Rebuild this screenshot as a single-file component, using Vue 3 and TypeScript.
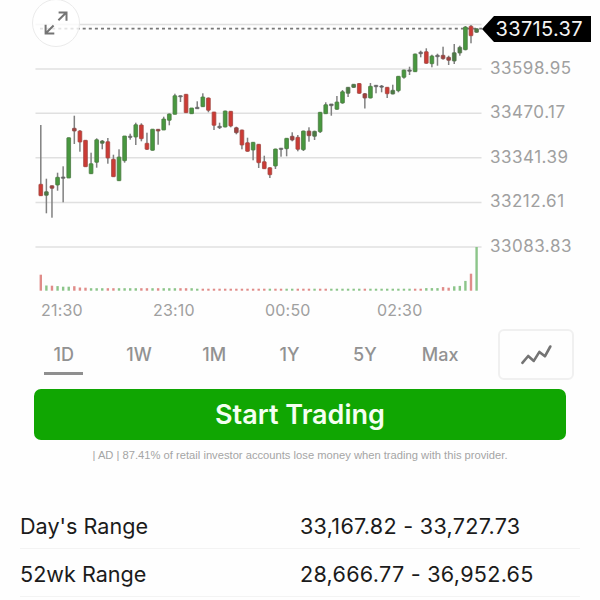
<script setup lang="ts">
type Tone = 'g' | 'r' | 'n' | 'dg' | 'dr'
type Candle = [tone: Tone, top: number, bottom: number, high: number, low: number]

const STEP = 5.587
const FIRST = 40.8
const BASELINE = 290.7

const gridLines: number[] = [24.5, 69, 113.3, 157.8, 202.4, 247]

const candles: Candle[] = [
  ['r', 184.3, 195.7, 125, 196], ['dg', 191.7, 195.3, 178.7, 213.3], ['dr', 185.7, 188.3, 185.7, 217.7],
  ['g', 177.3, 185, 172.7, 190.7], ['n', 177, 178.3, 166.3, 202.3], ['g', 137.7, 178, 137.7, 178],
  ['dr', 128.3, 131, 115.7, 144], ['r', 131, 142, 130, 151.7], ['r', 140.3, 166.7, 140, 167],
  ['g', 163.7, 173.7, 152.7, 174], ['g', 139.7, 162.3, 138.3, 167.7], ['dg', 141, 143.3, 140, 149.3],
  ['r', 141.7, 158, 138, 163.7], ['r', 159.3, 176.7, 154.7, 177], ['g', 157, 180.7, 149.3, 181],
  ['g', 136, 160.7, 136, 162.7], ['n', 136.2, 137.4, 133.7, 139.7], ['g', 124.7, 137, 122.7, 145],
  ['r', 125, 138.7, 123.3, 141.3], ['r', 143.3, 149.3, 132.7, 150], ['g', 129.2, 150.3, 129, 150.5],
  ['dr', 129.3, 131, 129, 144.7], ['g', 119, 130, 116.7, 130], ['g', 114, 120.3, 113.5, 125.3],
  ['g', 95.7, 114.3, 93.7, 114.3], ['n', 95.7, 96.8, 95.5, 102], ['r', 94.3, 112.7, 94, 113],
  ['g', 108, 113.7, 108, 114], ['n', 107.3, 108.7, 101.3, 108.7], ['g', 97, 106.7, 93.3, 107],
  ['r', 98, 110.3, 97.5, 112.3], ['r', 112, 125.3, 112, 130], ['n', 126.3, 127.7, 122.7, 129],
  ['g', 111, 127, 110.7, 127.3], ['r', 111.3, 126, 111, 127.3], ['dr', 127.7, 132.7, 126.7, 134.3],
  ['r', 130, 145, 129.7, 149.3], ['r', 142.7, 151.3, 137.7, 151.7], ['g', 142.3, 150, 142, 160.3],
  ['r', 144.3, 162.7, 144, 168], ['r', 161.7, 168.7, 155.7, 169], ['r', 167.7, 174.7, 167.3, 178],
  ['g', 149, 166, 148.7, 169], ['n', 148.2, 149.4, 148, 156.7], ['g', 138.3, 148.7, 138, 156.3],
  ['dr', 136.3, 140, 132.3, 141.3], ['r', 137.3, 149.3, 135, 151.3], ['g', 131, 149.7, 130.7, 151],
  ['dr', 131, 135.7, 127.3, 141.7], ['dg', 131.3, 136.3, 130.7, 140], ['g', 112.3, 131.7, 112, 133],
  ['g', 104.7, 113.7, 102.3, 114], ['n', 104, 105.7, 104, 115.7], ['g', 102, 109.3, 96, 109.7],
  ['g', 91.7, 103, 90, 103.7], ['dg', 87.3, 93.3, 87, 97], ['dg', 84.3, 87.4, 84, 87.7],
  ['r', 83.5, 93.3, 83.3, 93.7], ['dr', 93.7, 98, 93, 108.5], ['g', 86.3, 98, 83, 98.3],
  ['n', 85.3, 86.7, 85, 93.3], ['n', 86, 87.2, 85, 92.3], ['r', 87.3, 93.7, 87, 98],
  ['dg', 90.3, 94, 84.7, 94.3], ['g', 76.3, 90.7, 76, 92.3], ['g', 70, 77.3, 69.7, 78.7],
  ['n', 70, 71.3, 66.7, 75], ['g', 54, 71.7, 53.7, 72], ['n', 52.2, 53.7, 50.7, 57.3],
  ['r', 51.7, 63.3, 48.3, 63.7], ['g', 56, 63.7, 54.7, 67.3], ['n', 55.3, 56.7, 53.7, 65.7],
  ['dr', 55.3, 58.7, 46.7, 59.7], ['dr', 57.3, 60.3, 55.7, 65], ['dg', 52.7, 61, 44, 64],
  ['dg', 47.3, 53, 45.7, 55.7], ['g', 27, 49.7, 26, 50.3], ['r', 26.3, 35.7, 25, 43.3],
  ['dg', 28.7, 32.3, 28.5, 32.7],
]

const volumeTones = 'rgrgggrrrgggrrggggrrgrgggrrggrrrrrrrrrrrrgrrggrrrgrrggggggrggggggggrrgggrrggggrg'
const volumeHeights: Record<number, number> = {
  0: 16, 1: 5.2, 2: 5, 3: 4.6, 4: 4, 5: 4, 6: 4.5, 7: 3.2, 8: 3,
  69: 2.6, 70: 2.6, 71: 2.6, 72: 3.6, 73: 3, 74: 4.4, 75: 4.8, 76: 9.8, 77: 17, 78: 43.7,
}

const volumeHeight = (i: number): number => volumeHeights[i] ?? (i < 28 ? 2.5 : 2)
const volumeTone = (i: number): string =>
  i === 78 ? 'g' : i === 77 || i === 72 || i === 73 ? 'r' : i > 73 ? 'g' : volumeTones[i]
const xAt = (i: number): number => FIRST + i * STEP

const prices: string[] = ['33598.95', '33470.17', '33341.39', '33212.61', '33083.83']
const times: string[] = ['21:30', '23:10', '00:50', '02:30']
const ranges: string[] = ['1D', '1W', '1M', '1Y', '5Y', 'Max']
const stats = [
  { label: "Day's Range", value: '33,167.82 - 33,727.73' },
  { label: '52wk Range', value: '28,666.77 - 36,952.65' },
]
</script>

<template>
  <main class="screen">
    <section class="chart">
      <svg class="plot" width="482" height="296" viewBox="0 0 482 296">
        <line v-for="y in gridLines" :key="y" class="grid" x1="35.5" x2="481.5" :y1="y" :y2="y" />
        <line class="last" x1="40" x2="482" y1="28.7" y2="28.7" />
        <g v-for="(c, i) in candles" :key="i">
          <rect class="wick" :x="xAt(i) - 0.75" :y="c[3]" width="1.5" :height="c[4] - c[3]" />
          <rect :class="['body', c[0]]" :x="xAt(i) - 1.85" :y="c[1]" width="3.7" :height="c[2] - c[1]" rx=".4" />
        </g>
        <rect
          v-for="(c, i) in candles"
          :key="'v' + i"
          :class="['vol', 'vol-' + volumeTone(i)]"
          :x="xAt(i) - 1.2"
          :y="BASELINE - volumeHeight(i)"
          width="2.4"
          :height="volumeHeight(i)"
        />
      </svg>
      <div class="axis">
        <div class="tag"><span>33715.37</span></div>
        <span v-for="p in prices" :key="p" class="price">{{ p }}</span>
      </div>
      <button class="expand" aria-label="Expand chart">
        <svg width="26" height="26" viewBox="0 0 26 26">
          <path d="M15.4 10.3 23.3 2.5M15.6 2.4h7.9v8.3M10.6 15.5 2.8 23.3M2.6 14.8v8.8h8.7" />
        </svg>
      </button>
    </section>

    <div class="times">
      <span v-for="t in times" :key="t">{{ t }}</span>
    </div>

    <nav class="ranges">
      <button v-for="(r, i) in ranges" :key="r" :class="['range', { active: i === 0 }]">{{ r }}</button>
      <button class="style" aria-label="Line chart">
        <svg width="32" height="24" viewBox="0 0 32 24">
          <path d="M2.4 19.8 8.2 13l5.6 4.9 5.6-9 5.5 4.4 5.4-9.8" />
        </svg>
      </button>
    </nav>

    <button class="cta">Start Trading</button>
    <p class="ad">| AD | 87.41% of retail investor accounts lose money when trading with this provider.</p>

    <dl class="stats">
      <div v-for="s in stats" :key="s.label" class="stat">
        <dt>{{ s.label }}</dt>
        <dd>{{ s.value }}</dd>
      </div>
    </dl>
  </main>
</template>

<style>
body {
  background: #fefefe;
}
</style>

<style scoped>
.screen {
  box-sizing: border-box;
  width: 600px;
  height: 600px;
  overflow: hidden;
  background: #fefefe;
  font-family: Inter, "Liberation Sans", sans-serif;
}
button {
  padding: 0;
  border: 0;
  background: none;
  font-family: inherit;
}
.chart {
  position: relative;
  display: flex;
  height: 296px;
}
.plot {
  flex: none;
}
.grid {
  stroke: #e0e0e0;
  stroke-width: 1.5;
}
.last {
  stroke: #777;
  stroke-width: 1.8;
  stroke-dasharray: 3 3.1;
}
.wick {
  fill: #808080;
}
.body {
  stroke-width: 0.8;
}
.g {
  fill: #48983f;
  stroke: #4b7a43;
}
.r {
  fill: #cc3b35;
  stroke: #a14742;
}
.dg {
  fill: #4b7c44;
  stroke: #55704f;
}
.dr {
  fill: #a3413e;
  stroke: #844b49;
}
.n {
  fill: #626062;
  stroke: #6a696a;
}
.vol-g {
  fill: #8cc58a;
}
.vol-r {
  fill: #e08c89;
}
.axis {
  display: flex;
  flex-direction: column;
  padding-top: 16px;
}
.tag {
  box-sizing: border-box;
  width: 109px;
  height: 26px;
  padding-left: 13.5px;
  background: #000;
  clip-path: polygon(0 50%, 12px 0, 100% 0, 100% 100%, 12px 100%);
  color: #f4f4f4;
  font-size: 20px;
  line-height: 26px;
  letter-spacing: 0.35px;
}
.price {
  height: 44.5px;
  padding-left: 8px;
  color: #a0a0a0;
  font-size: 17px;
  line-height: 20px;
  letter-spacing: 0.5px;
}
.tag + .price {
  margin-top: 15.5px;
}
.expand {
  position: absolute;
  top: -1px;
  left: 32px;
  display: grid;
  place-items: center;
  width: 48px;
  height: 48px;
  border: 1.8px solid #ebebeb;
  border-radius: 50%;
  background: rgba(255, 255, 255, 0.8);
}
.expand path,
.style path {
  fill: none;
  stroke: #747474;
  stroke-width: 2;
}
.times {
  display: flex;
  gap: 69.5px;
  height: 33px;
  padding-left: 41px;
  color: #a0a0a0;
  font-size: 16px;
  line-height: 28px;
  letter-spacing: 0.2px;
}
.times span {
  width: 42.5px;
  white-space: nowrap;
}
.ranges {
  display: flex;
  height: 51px;
  padding-left: 26px;
}
.range {
  position: relative;
  width: 75.3px;
  color: #929292;
  font-size: 18px;
  font-weight: 500;
  line-height: 51px;
}
.active::after {
  content: "";
  position: absolute;
  left: 18px;
  bottom: 5px;
  width: 39px;
  height: 3px;
  background: #8f8f8f;
}
.style {
  box-sizing: border-box;
  display: grid;
  place-items: center;
  width: 76px;
  height: 51px;
  margin-left: 20px;
  border: 2px solid #f0f0f0;
  border-radius: 6px;
}
.style path {
  stroke-width: 2.6;
  stroke-linejoin: round;
  stroke-linecap: round;
}
.cta {
  display: block;
  width: 532px;
  height: 51px;
  margin: 9px 0 0 34px;
  border-radius: 7px;
  background: #10a602;
  color: #f4fff1;
  font-size: 27px;
  font-weight: 600;
  line-height: 50px;
}
.ad {
  margin: 8px 0 0;
  color: #a5a5a5;
  font-family: "Liberation Sans", Arial, sans-serif;
  font-size: 11.2px;
  line-height: 14px;
  text-align: center;
  white-space: nowrap;
}
.stats {
  margin: 39px 20px 0;
  color: #1b1b1b;
  font-size: 21.6px;
}
.stat {
  box-sizing: border-box;
  display: flex;
  height: 48px;
  border-bottom: 1px solid #f3f3f3;
  line-height: 50px;
}
dt {
  width: 280px;
}
dd {
  margin: 0;
  letter-spacing: 0.27px;
  white-space: nowrap;
}
</style>
